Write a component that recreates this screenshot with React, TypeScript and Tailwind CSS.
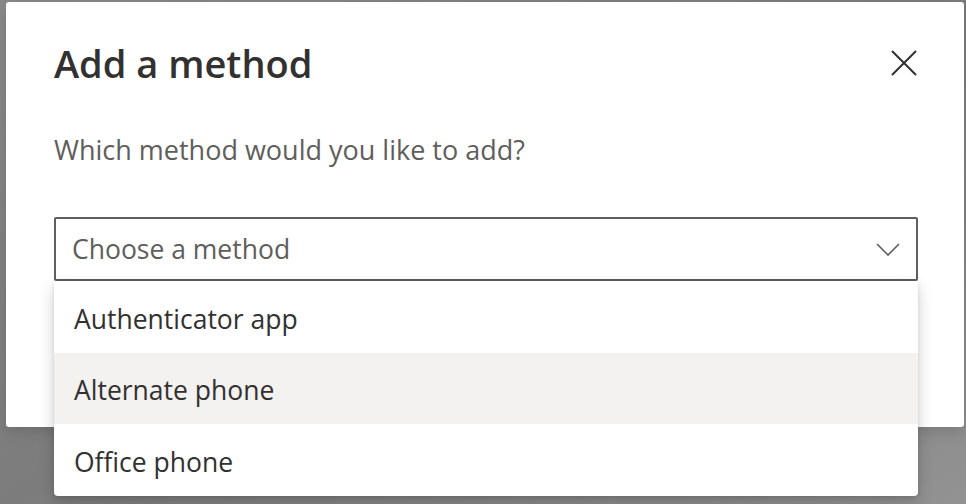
import React from "react";

export default function App() {
  const font = { fontFamily: '"Open Sans", "Noto Sans", sans-serif' };
  return (
    <div
      className="w-[966px] h-[504px] overflow-hidden bg-gradient-to-br from-[#8a8a8a] via-[#7c7c7c] to-[#929292] pt-[2px] pl-[6px]"
      style={font}
    >
      <div className="relative w-[958px] h-[425px] bg-white rounded-[3px] shadow-[0_4px_16px_rgba(0,0,0,0.15)] pl-[48px] pr-[46px]">
        <div className="flex items-center justify-between h-[124px] pb-[2px]">
          <h1 className="text-[38px] font-semibold text-[#323130] leading-none -mt-[1px]">
            Add a method
          </h1>
          <button className="w-[40px] h-[40px] flex items-center justify-center text-[#323130] mr-[-6px]">
            <svg width="26" height="26" viewBox="0 0 26 26" fill="none">
              <path d="M1 1 L25 25 M25 1 L1 25" stroke="#323130" strokeWidth="2" />
            </svg>
          </button>
        </div>
        <p className="text-[27px] text-[#605e5c] leading-none mt-[10px]">
          Which method would you like to add?
        </p>
        <div className="relative mt-[54px] w-[864px]">
          <div className="h-[64px] border-2 border-[#605e5c] rounded-[2px] flex items-center justify-between pl-[16px] pr-[16px] pt-[2px]">
            <span className="text-[26.5px] text-[#605e5c]">Choose a method</span>
            <svg width="24" height="14" viewBox="0 0 24 14" fill="none">
              <path d="M1 1 L12 12 L23 1" stroke="#605e5c" strokeWidth="1.6" />
            </svg>
          </div>
          <div className="absolute left-0 top-full w-[864px] bg-white rounded-b-[4px] shadow-[0_6px_16px_rgba(0,0,0,0.18),0_1px_4px_rgba(0,0,0,0.1)] z-10">
            <div className="h-[72px] flex items-center pl-[20px] pt-[5px] text-[26.5px] text-[#323130]">Authenticator app</div>
            <div className="h-[71px] flex items-center pl-[20px] pt-[5px] text-[26.5px] text-[#323130] bg-[#f3f2f1]">Alternate phone</div>
            <div className="h-[72px] flex items-center pl-[20px] pt-[5px] text-[26.5px] text-[#323130]">Office phone</div>
          </div>
        </div>
      </div>
    </div>
  );
}
